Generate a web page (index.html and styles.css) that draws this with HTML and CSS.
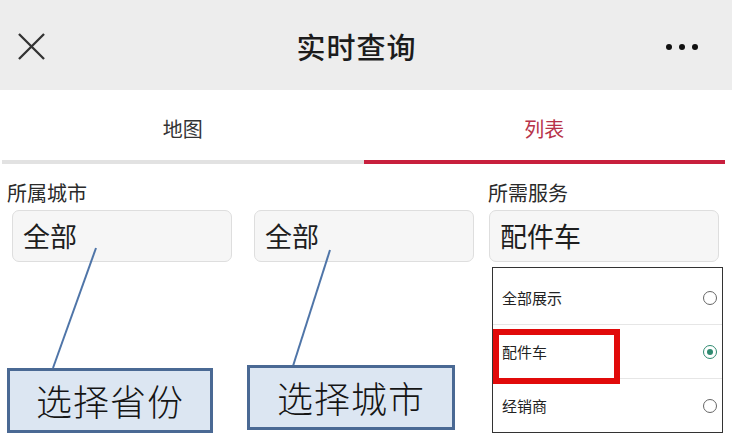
FILE: index.html
```html
<!DOCTYPE html>
<html lang="zh-CN">
<head>
  <meta charset="UTF-8" />
  <meta name="viewport" content="width=device-width, initial-scale=1.0"/>
  <title>实时查询</title>
  <link rel="stylesheet" href="styles.css">
</head>
<body>
  <div class="topbar">
    <svg class="close" width="28" height="28" viewBox="0 0 28 28">
      <path d="M1 1 L27 27 M27 1 L1 27" stroke="#333" stroke-width="2.4" fill="none"/>
    </svg>
    <h1>实时查询</h1>
    <div class="more"><span></span><span></span><span></span></div>
  </div>

  <div class="tabs">
    <div class="tab">地图</div>
    <div class="tab active">列表</div>
  </div>

  <div class="filters">
    <div class="field f1">
      <label>所属城市</label>
      <div class="box">全部</div>
    </div>
    <div class="field f2">
      <label>&nbsp;</label>
      <div class="box">全部</div>
    </div>
    <div class="field f3">
      <label>所需服务</label>
      <div class="box">配件车</div>
      <ul class="menu">
        <li>全部展示<i class="radio"></i></li>
        <li>配件车<i class="radio on"></i></li>
        <li>经销商<i class="radio"></i></li>
      </ul>
    </div>
  </div>

  <!-- annotations -->
  <svg class="pointers" width="732" height="442">
    <line x1="96" y1="248" x2="53" y2="368" stroke="#4f75a8" stroke-width="2"/>
    <line x1="330" y1="250" x2="293" y2="366" stroke="#4f75a8" stroke-width="2"/>
  </svg>
  <div class="note n1">选择省份</div>
  <div class="note n2">选择城市</div>
  <div class="mark"></div>
</body>
</html>
```

FILE: styles.css
```css
body { margin: 0; background: #fff; font-family: "Noto Sans CJK SC", "Noto Sans", sans-serif; color: #222; position: relative; width: 732px; height: 442px; overflow: hidden; }

.topbar { height: 90px; background: #ededed; display: flex; align-items: center; padding: 0 0 0 18px; }
.topbar .close { width: 27px; height: 27px; margin-top: 3px; }
.topbar h1 { flex: 1; margin: 0; text-align: center; font-size: 29px; font-weight: 500; color: #1c1c1c; padding-left: 2px; margin-top: 2px; letter-spacing: 1px; }
.more { display: flex; gap: 7px; width: 66px; margin-top: 4px; }
.more span { width: 6px; height: 6px; border-radius: 50%; background: #111; }

.tabs { display: flex; margin-left: 2px; width: 723px; }
.tab { flex: 1; height: 70px; line-height: 78px; text-align: center; font-size: 20px; color: #333; border-bottom: 4px solid #e2e2e2; }
.tab.active { color: #b73249; border-bottom-color: #c81f3d; }

.filters { display: flex; align-items: flex-start; margin-top: 17px; }
.field label { display: block; font-size: 20px; line-height: 24px; height: 24px; color: #2a2a2a; margin-bottom: 5px; }
.box { height: 52px; border: 1px solid #dedede; border-radius: 7px; background: #f6f6f6; font-size: 27px; line-height: 50px; padding-left: 10px; box-sizing: border-box; color: #1e1e1e; }
.f1 { margin-left: 12px; width: 220px; }
.f1 label { margin-left: -5px; }
.f2 { margin-left: 22px; width: 220px; }
.f3 { margin-left: 15px; width: 230px; }
.f3 label { margin-left: -1px; }

.menu { list-style: none; margin: 5px -4px 0 3px; padding: 3px 0 0; border: 1px solid #333; background: #fff; }
.menu li { height: 53px; border-bottom: 1px solid #e6e6e6; display: flex; align-items: center; justify-content: space-between; padding: 0 5px 0 9px; font-size: 15px; color: #222; }
.menu li:last-child { border-bottom: 0; }
.radio { width: 12px; height: 12px; border: 1.5px solid #666; border-radius: 50%; position: relative; }
.radio.on { border-color: #2f8a70; }
.radio.on::after { content: ""; position: absolute; left: 3px; top: 3px; width: 6px; height: 6px; border-radius: 50%; background: #2f8a70; }

.pointers { position: absolute; left: 0; top: 0; }
.note { position: absolute; background: #dce6f2; border: 3px solid #4a6994; box-sizing: border-box; font-size: 36px; font-weight: 300; line-height: 58px; text-align: center; color: #151515; letter-spacing: 1px; }
.n1 { left: 7px; top: 368px; width: 206px; height: 65px; }
.n2 { left: 247px; top: 365px; width: 208px; height: 65px; }
.mark { position: absolute; left: 493px; top: 329px; width: 127px; height: 55px; border: 6px solid #e10a0a; box-sizing: border-box; }
```
